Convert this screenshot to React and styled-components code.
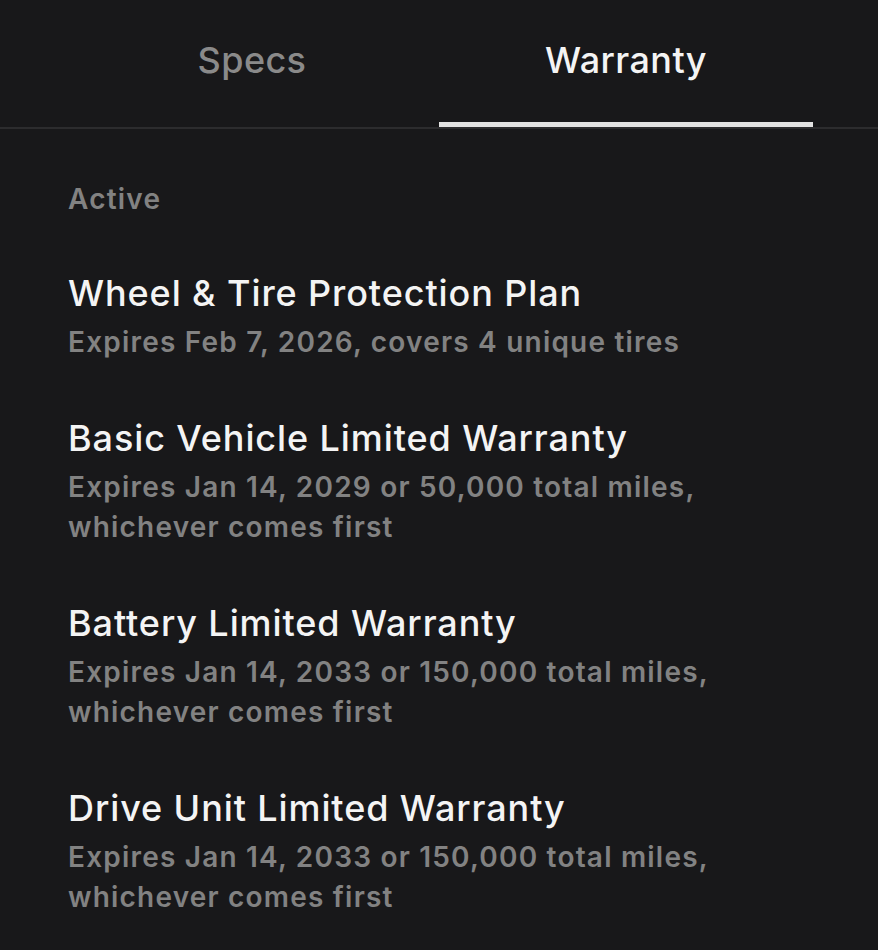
import React from 'react'
import styled, { createGlobalStyle } from "styled-components"

const GlobalStyle = createGlobalStyle`
  html, body {
    margin: 0;
    padding: 0;
    background: #18181a;
  }
  body {
    font-family: Inter, "Noto Sans", "Liberation Sans", sans-serif;
    -webkit-font-smoothing: antialiased;
  }
`;

const warranties = [
  {
    title: "Wheel & Tire Protection Plan",
    lines: ["Expires Feb 7, 2026, covers 4 unique tires"],
  },
  {
    title: "Basic Vehicle Limited Warranty",
    lines: ["Expires Jan 14, 2029 or 50,000 total miles,", "whichever comes first"],
  },
  {
    title: "Battery Limited Warranty",
    lines: ["Expires Jan 14, 2033 or 150,000 total miles,", "whichever comes first"],
  },
  {
    title: "Drive Unit Limited Warranty",
    lines: ["Expires Jan 14, 2033 or 150,000 total miles,", "whichever comes first"],
  },
];

const App = () => {
  return (
    <Container>
      <GlobalStyle />
      <TabBar>
        <Tab>Specs</Tab>
        <Tab active>Warranty</Tab>
      </TabBar>
      <Content>
        <SectionLabel>Active</SectionLabel>
        <List>
          {warranties.map((w) => (
            <Item key={w.title}>
              <Title>{w.title}</Title>
              {w.lines.map((l) => (
                <Detail key={l}>{l}</Detail>
              ))}
            </Item>
          ))}
        </List>
      </Content>
    </Container>
  );
}

export default App

const Container = styled.div`
  width: 878px;
  min-height: 950px;
  background: #18181a;
  display: flex;
  flex-direction: column;
`;
const TabBar = styled.div`
  display: flex;
  padding: 0 65px;
  height: 127px;
  border-bottom: 2px solid #2c2c2e;
`;
const Tab = styled.div`
  flex: 1;
  display: flex;
  justify-content: center;
  padding-top: 38px;
  box-sizing: border-box;
  font-size: 36px;
  font-weight: 500;
  letter-spacing: 0.4px;
  color: ${(p) => (p.active ? "#f4f4f4" : "#8a8a8a")};
  border-bottom: 5px solid ${(p) => (p.active ? "#e2e2e2" : "transparent")};
`;
const Content = styled.div`
  padding: 54px 68px 0;
  display: flex;
  flex-direction: column;
`;
const SectionLabel = styled.div`
  font-size: 28px;
  font-weight: 600;
  letter-spacing: 1.2px;
  color: #828282;
  line-height: 32px;
`;
const List = styled.div`
  display: flex;
  flex-direction: column;
  gap: 56px;
  margin-top: 58px;
`;
const Item = styled.div`
  display: flex;
  flex-direction: column;
`;
const Title = styled.div`
  font-size: 36px;
  font-weight: 500;
  letter-spacing: 0.9px;
  color: #f4f4f4;
  line-height: 40px;
  margin-bottom: 9px;
`;
const Detail = styled.div`
  font-size: 28px;
  font-weight: 600;
  letter-spacing: 1.2px;
  color: #828282;
  line-height: 40px;
`;
